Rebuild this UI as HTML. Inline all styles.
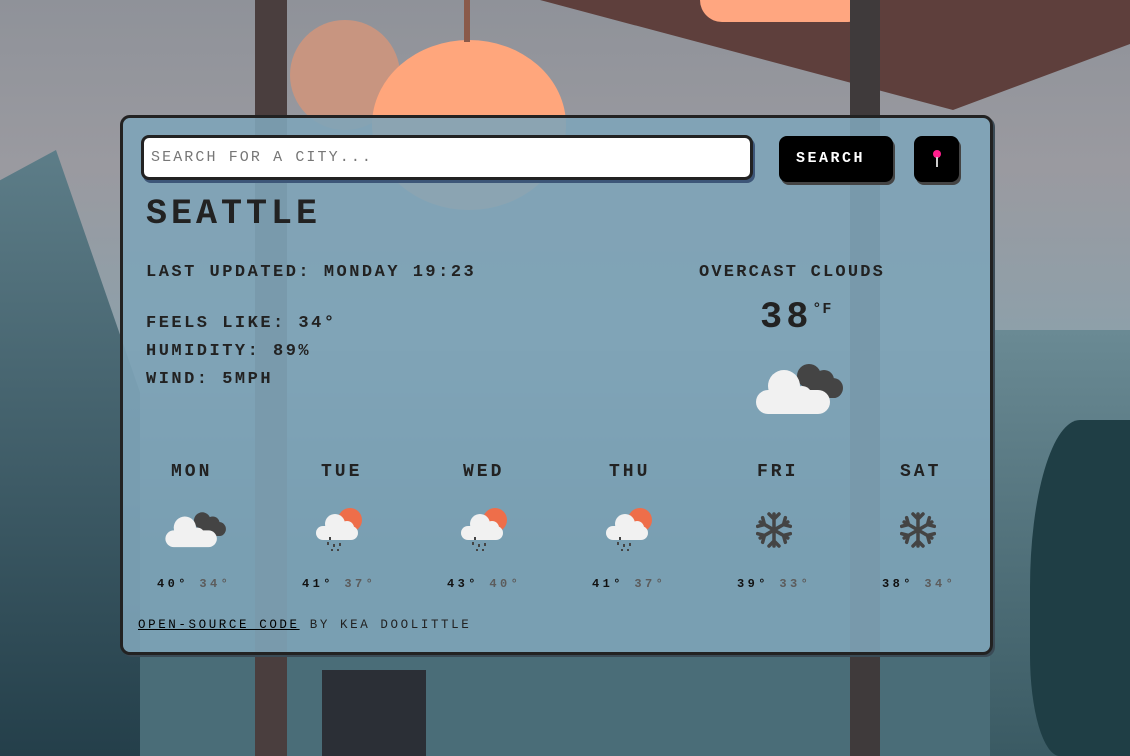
<!DOCTYPE html>
<html><head><meta charset="utf-8"><style>
*{margin:0;padding:0;box-sizing:border-box}
html,body{width:1130px;height:756px;overflow:hidden}
body{position:relative;background:linear-gradient(#8f9299 0%,#9a9aa0 22%,#8da0aa 45%,#4f7480 70%,#3d5e68 100%);font-family:"Liberation Mono",monospace;font-weight:bold;text-transform:uppercase;color:#222}
.abs{position:absolute}
.panel{left:120px;top:115px;width:873px;height:540px;border:3px solid #222;border-radius:10px;background:rgba(126,164,184,.9);box-shadow:2px 2px 0 #3a4a55}
.t{position:absolute;white-space:nowrap}
</style></head><body>
<div class="abs" style="left:0;top:560px;width:1130px;height:196px;background:#4a6d78"></div>
<div class="abs" style="left:0;top:150px;width:140px;height:606px;background:linear-gradient(#5d7d88,#243f4a);clip-path:polygon(0 5%,40% 0,100% 40%,100% 100%,0 100%)"></div>
<div class="abs" style="left:990px;top:330px;width:140px;height:426px;background:linear-gradient(#6a8a94,#3a5a63)"></div>
<div class="abs" style="left:1030px;top:420px;width:100px;height:336px;background:#1f3e45;border-radius:50% 0 0 30%"></div>
<div class="abs" style="left:540px;top:0;width:590px;height:110px;background:#5e3f3c;clip-path:polygon(0 0,100% 0,100% 40%,70% 100%)"></div>
<div class="abs" style="left:700px;top:0;width:170px;height:22px;background:#ffa680;border-radius:0 0 85px 85px"></div>
<div class="abs" style="left:255px;top:0;width:32px;height:756px;background:#4a3e3e"></div>
<div class="abs" style="left:850px;top:0;width:30px;height:756px;background:#3f3a3b"></div>
<div class="abs" style="left:290px;top:20px;width:110px;height:110px;background:#c89580;border-radius:50%"></div>
<div class="abs" style="left:372px;top:40px;width:194px;height:170px;background:#ffa67c;border-radius:50%"></div>
<div class="abs" style="left:464px;top:0;width:6px;height:42px;background:#8a5a4a"></div>
<div class="abs" style="left:322px;top:670px;width:104px;height:86px;background:#2b2f36"></div>
<div class="panel abs"></div>
<div class="abs" style="left:141px;top:135px;width:612px;height:45px;background:#fff;border:3px solid #222;border-radius:8px;box-shadow:2px 3px 0 #3d5678"></div>
<div class="t" style="left:151px;top:149px;font-size:15px;letter-spacing:2.1px;color:#777;font-weight:normal">Search for a city...</div>
<div class="abs" style="left:779px;top:136px;width:114px;height:46px;background:#000;border-radius:8px;box-shadow:2px 3px 0 #444"></div>
<div class="t" style="left:796px;top:150px;font-size:15px;letter-spacing:2.5px;color:#fff">Search</div>
<div class="abs" style="left:914px;top:136px;width:45px;height:46px;background:#000;border-radius:8px;box-shadow:2px 3px 0 #444"></div>
<div class="abs" style="left:933px;top:150px;width:8px;height:8px;border-radius:50%;background:#ff1f8e"></div>
<div class="abs" style="left:936px;top:157px;width:2px;height:10px;background:#ccc"></div>
<div class="t" style="left:146px;top:194px;font-size:35px;letter-spacing:4px">Seattle</div>
<div class="t" style="left:146px;top:263px;font-size:17px;letter-spacing:2.5px">Last updated: Monday 19:23</div>
<div class="t" style="left:146px;top:310px;font-size:17px;letter-spacing:2.5px;line-height:28px">Feels like: 34°<br>Humidity: 89%<br>Wind: 5mph</div>
<div class="t" style="left:699px;top:263px;font-size:17px;letter-spacing:2.2px">Overcast clouds</div>
<div class="t" style="left:760px;top:297px;font-size:37px;letter-spacing:4px">38<span style="font-size:15px;vertical-align:top;position:relative;top:4px;letter-spacing:1px">°F</span></div>
<svg class="abs" style="left:754px;top:358px" width="92" height="60" viewBox="0 0 92 60"><g fill="#444"><circle cx="55" cy="18" r="12"/><circle cx="70" cy="22" r="10"/><circle cx="79" cy="30" r="10"/><rect x="50" y="22" width="38" height="18" rx="8"/></g><g fill="#f1f1f1"><circle cx="30" cy="28" r="16"/><circle cx="48" cy="38" r="10"/><rect x="2" y="32" width="74" height="24" rx="12"/></g></svg>
<div class="t" style="left:171px;top:462px;font-size:18px;letter-spacing:3px">Mon</div>
<div class="t" style="left:321px;top:462px;font-size:18px;letter-spacing:3px">Tue</div>
<div class="t" style="left:463px;top:462px;font-size:18px;letter-spacing:3px">Wed</div>
<div class="t" style="left:609px;top:462px;font-size:18px;letter-spacing:3px">Thu</div>
<div class="t" style="left:757px;top:462px;font-size:18px;letter-spacing:3px">Fri</div>
<div class="t" style="left:900px;top:462px;font-size:18px;letter-spacing:3px">Sat</div>
<svg class="abs" style="left:164px;top:508px" width="64" height="42" viewBox="0 0 92 60"><g fill="#444"><circle cx="55" cy="18" r="12"/><circle cx="70" cy="22" r="10"/><circle cx="79" cy="30" r="10"/><rect x="50" y="22" width="38" height="18" rx="8"/></g><g fill="#f1f1f1"><circle cx="30" cy="28" r="16"/><circle cx="48" cy="38" r="10"/><rect x="2" y="32" width="74" height="24" rx="12"/></g></svg>
<svg class="abs" style="left:315px;top:506px" width="50" height="46" viewBox="0 0 50 46"><circle cx="35" cy="14" r="12" fill="#ee6e4a"/><g fill="#f1f1f1"><circle cx="20" cy="18" r="10"/><circle cx="32" cy="22" r="7"/><rect x="1" y="20" width="42" height="14" rx="7"/></g><g fill="#444"><rect x="12" y="36" width="2" height="3"/><rect x="18" y="38" width="2" height="3"/><rect x="24" y="37" width="2" height="3"/><rect x="16" y="43" width="2" height="2"/><rect x="22" y="43" width="2" height="2"/><rect x="14" y="31" width="2" height="3"/></g></svg>
<svg class="abs" style="left:460px;top:506px" width="50" height="46" viewBox="0 0 50 46"><circle cx="35" cy="14" r="12" fill="#ee6e4a"/><g fill="#f1f1f1"><circle cx="20" cy="18" r="10"/><circle cx="32" cy="22" r="7"/><rect x="1" y="20" width="42" height="14" rx="7"/></g><g fill="#444"><rect x="12" y="36" width="2" height="3"/><rect x="18" y="38" width="2" height="3"/><rect x="24" y="37" width="2" height="3"/><rect x="16" y="43" width="2" height="2"/><rect x="22" y="43" width="2" height="2"/><rect x="14" y="31" width="2" height="3"/></g></svg>
<svg class="abs" style="left:605px;top:506px" width="50" height="46" viewBox="0 0 50 46"><circle cx="35" cy="14" r="12" fill="#ee6e4a"/><g fill="#f1f1f1"><circle cx="20" cy="18" r="10"/><circle cx="32" cy="22" r="7"/><rect x="1" y="20" width="42" height="14" rx="7"/></g><g fill="#444"><rect x="12" y="36" width="2" height="3"/><rect x="18" y="38" width="2" height="3"/><rect x="24" y="37" width="2" height="3"/><rect x="16" y="43" width="2" height="2"/><rect x="22" y="43" width="2" height="2"/><rect x="14" y="31" width="2" height="3"/></g></svg>
<svg class="abs" style="left:756px;top:512px" width="36" height="36" viewBox="-18 -18 36 36"><g stroke="#444" stroke-width="3.5" stroke-linecap="round" fill="none"><path d="M0-16V16M0-11l-5-5M0-11l5-5M0 11l-5 5M0 11l5 5"/><g transform="rotate(60)"><path d="M0-16V16M0-11l-5-5M0-11l5-5M0 11l-5 5M0 11l5 5"/></g><g transform="rotate(-60)"><path d="M0-16V16M0-11l-5-5M0-11l5-5M0 11l-5 5M0 11l5 5"/></g></g></svg>
<svg class="abs" style="left:900px;top:512px" width="36" height="36" viewBox="-18 -18 36 36"><g stroke="#444" stroke-width="3.5" stroke-linecap="round" fill="none"><path d="M0-16V16M0-11l-5-5M0-11l5-5M0 11l-5 5M0 11l5 5"/><g transform="rotate(60)"><path d="M0-16V16M0-11l-5-5M0-11l5-5M0 11l-5 5M0 11l5 5"/></g><g transform="rotate(-60)"><path d="M0-16V16M0-11l-5-5M0-11l5-5M0 11l-5 5M0 11l5 5"/></g></g></svg>
<div class="t" style="left:157px;top:577px;font-size:12px;letter-spacing:3.4px;color:#111">40° <span style="color:#5c5c5c">34°</span></div>
<div class="t" style="left:302px;top:577px;font-size:12px;letter-spacing:3.4px;color:#111">41° <span style="color:#5c5c5c">37°</span></div>
<div class="t" style="left:447px;top:577px;font-size:12px;letter-spacing:3.4px;color:#111">43° <span style="color:#5c5c5c">40°</span></div>
<div class="t" style="left:592px;top:577px;font-size:12px;letter-spacing:3.4px;color:#111">41° <span style="color:#5c5c5c">37°</span></div>
<div class="t" style="left:737px;top:577px;font-size:12px;letter-spacing:3.4px;color:#111">39° <span style="color:#5c5c5c">33°</span></div>
<div class="t" style="left:882px;top:577px;font-size:12px;letter-spacing:3.4px;color:#111">38° <span style="color:#5c5c5c">34°</span></div>
<div class="t" style="left:138px;top:618px;font-size:12.5px;letter-spacing:2.6px;font-weight:normal;color:#222"><span style="text-decoration:underline;color:#000">Open-source code</span> by Kea Doolittle</div>
</body></html>
